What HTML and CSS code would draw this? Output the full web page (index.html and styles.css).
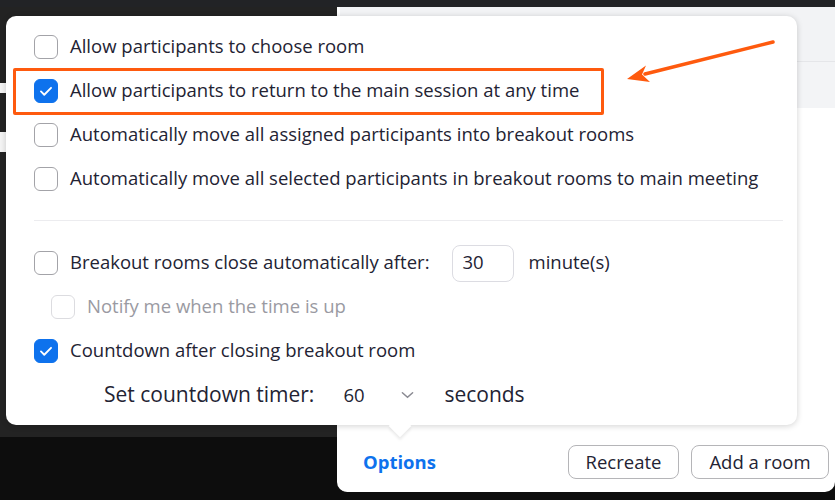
FILE: index.html
```html
<!DOCTYPE html>
<html>
<head>
<meta charset="utf-8">
<link rel="stylesheet" href="styles.css">
</head>
<body>
<div class="topstrip"></div>
<div class="stage">
  <div class="leftbg">
    <div class="bgmark m1"></div>
    <div class="bgmark m2"></div>
  </div>
  <div class="window">
    <div class="win-head"></div>
    <div class="win-sub"></div>
    <div class="win-body"></div>
    <div class="win-foot">
      <span class="options">Options</span>
      <div class="btns">
        <button class="btn">Recreate</button>
        <button class="btn">Add a room</button>
      </div>
    </div>
  </div>

  <div class="popup">
    <div class="row"><span class="cb"></span><span class="lbl">Allow participants to choose room</span></div>
    <div class="row"><span class="cb on"><svg viewBox="0 0 24 24"><path d="M6.5 12.5l3.6 3.6 7.4-7.6"/></svg></span><span class="lbl">Allow participants to return to the main session at any time</span></div>
    <div class="row"><span class="cb"></span><span class="lbl">Automatically move all assigned participants into breakout rooms</span></div>
    <div class="row"><span class="cb"></span><span class="lbl">Automatically move all selected participants in breakout rooms to main meeting</span></div>
    <div class="divider"></div>
    <div class="row"><span class="cb"></span><span class="lbl">Breakout rooms close automatically after:</span><span class="num">30</span><span class="lbl unit">minute(s)</span></div>
    <div class="row sub"><span class="cb off"></span><span class="lbl dis">Notify me when the time is up</span></div>
    <div class="row"><span class="cb on"><svg viewBox="0 0 24 24"><path d="M6.5 12.5l3.6 3.6 7.4-7.6"/></svg></span><span class="lbl">Countdown after closing breakout room</span></div>
    <div class="row timer"><span class="lbl big">Set countdown timer:</span><span class="sel">60</span><svg class="chev" viewBox="0 0 14 8"><path d="M1.5 1.5l5.5 5 5.5-5"/></svg><span class="lbl big">seconds</span></div>
    <div class="highlight"></div>
    <div class="pointer"></div>
  </div>

  <svg class="arrow" viewBox="0 0 835 500" width="835" height="500">
    <line x1="773" y1="42" x2="645" y2="74" />
    <polygon points="627,79 646,65.5 642,74.5 650,82" />
  </svg>
</div>
</body>
</html>
```

FILE: styles.css
```css
* { box-sizing: border-box; }
html, body { margin: 0; padding: 0; }
body {
  width: 835px;
  height: 500px;
  overflow: hidden;
  background: #0d0d0d;
  font-family: "Open Sans", "Noto Sans", sans-serif;
  color: #232333;
}
.topstrip { height: 7px; background: #222326; }
.stage {
  position: relative;
  display: flex;
  align-items: flex-start;
  height: 493px;
}
.leftbg {
  position: relative;
  width: 337px;
  height: 430px;
  background: #232323;
}
.bgmark { position: absolute; left: 0; width: 8px; background: #f4f4f4; }
.m1 { top: 76px; height: 10px; }
.m2 { top: 125px; height: 20px; }
.window {
  flex: 1;
  height: 485px;
  background: #fff;
  border-radius: 0 0 10px 10px;
  display: flex;
  flex-direction: column;
  border-left: 3px solid #fff;
}
.win-head { height: 55px; background: #f2f3f5; border-bottom: 1px solid #e5e6e9; }
.win-sub { height: 46px; background: #f3f4f6; }
.win-body { flex: 1; }
.win-foot {
  display: flex;
  align-items: center;
  justify-content: space-between;
  padding: 0 6px 13px 23px;
}
.options { color: #0e72ed; font-weight: 700; font-size: 18.5px; margin-top: -2px; }
.btns { display: flex; gap: 12px; }
.btn {
  font-family: inherit;
  font-size: 18.5px;
  color: #232333;
  background: #fff;
  border: 1px solid #b5b5b8;
  border-radius: 8px;
  height: 34px;
  padding: 0 0 2px;
}
.btns .btn:first-child { width: 111px; }
.btns .btn:last-child { width: 138px; }

.popup {
  position: absolute;
  left: 6px;
  top: 9px;
  width: 791px;
  height: 409px;
  background: #fff;
  border-radius: 10px;
  box-shadow: 0 1px 6px rgba(0,0,0,0.18);
  padding: 9px 14px 0 28px;
}
.row {
  display: flex;
  align-items: center;
  height: 44px;
}
.cb {
  flex: none;
  width: 24px;
  height: 24px;
  border: 1.5px solid #a3a3a8;
  border-radius: 6px;
  margin-right: 12px;
  display: flex;
  align-items: center;
  justify-content: center;
}
.cb.on { background: #0e72ed; border-color: #0e72ed; }
.cb svg { width: 22px; height: 22px; fill: none; stroke: #fff; stroke-width: 2; stroke-linecap: round; stroke-linejoin: round; }
.cb.off { border-color: #dcdce0; }
.lbl { font-size: 18.5px; white-space: nowrap; padding-bottom: 3px; }
.lbl.dis { color: #9a9aa2; }
.row.sub { padding-left: 17px; }
.divider { height: 1px; background: #ececef; margin: 19px 0 20px; }
.num {
  width: 62px;
  height: 37px;
  border: 1px solid #dcdce2;
  border-radius: 8px;
  margin-left: 22px;
  padding: 0 0 3px 10px;
  display: flex;
  align-items: center;
  font-size: 18.5px;
}
.unit { margin-left: 15px; }
.row.timer { padding-left: 70px; height: 45px; }
.big { font-size: 21px; }
.sel { margin-left: 29px; font-size: 18.5px; width: 58px; padding-bottom: 3px; }
.chev { width: 13px; height: 8px; fill: none; stroke: #8a8a92; stroke-width: 1.6; stroke-linecap: round; margin-right: 30px; margin-top: -2px; }
.highlight {
  position: absolute;
  left: 7px;
  top: 52px;
  width: 591px;
  height: 47px;
  border: 3px solid #fe5a0e;
  border-radius: 2px;
}
.pointer {
  position: absolute;
  left: 386px;
  top: 402px;
  width: 16px;
  height: 16px;
  background: #fff;
  transform: rotate(45deg);
  box-shadow: 2px 2px 3px rgba(0,0,0,0.08);
}
.arrow {
  position: absolute;
  left: 0;
  top: -7px;
  pointer-events: none;
}
.arrow line { stroke: #fe5a0e; stroke-width: 3.5; stroke-linecap: round; }
.arrow polygon { fill: #fe5a0e; }
```
